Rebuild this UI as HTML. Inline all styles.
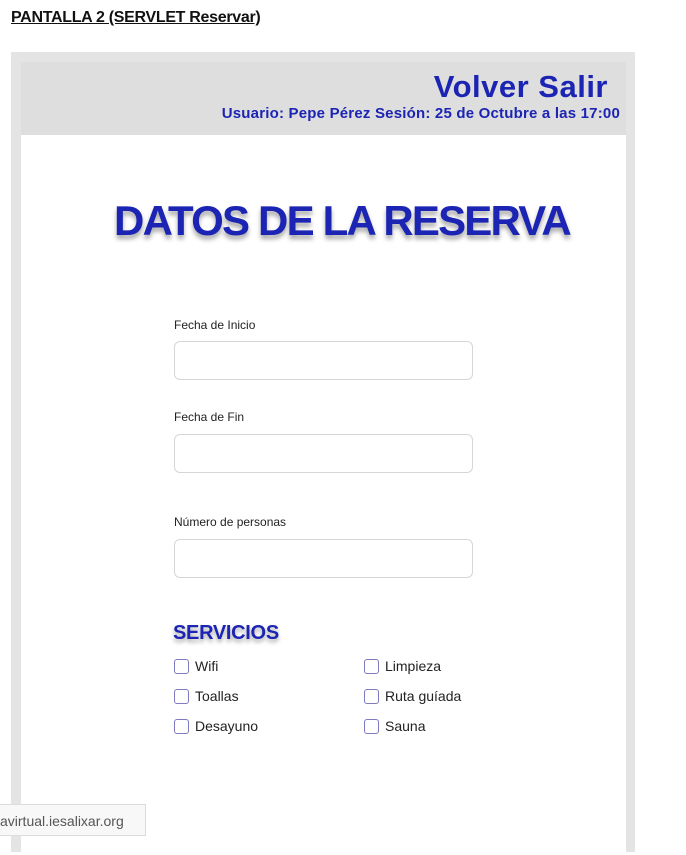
<!DOCTYPE html>
<html><head><meta charset="utf-8"><style>
body{margin:0;width:686px;height:834px;background:#fff;position:relative;overflow:hidden;font-family:"Liberation Sans",sans-serif}
.a{position:absolute}
.h{left:11px;top:9px;font-size:16px;font-weight:bold;text-decoration:underline;color:#111;letter-spacing:-0.3px}
.outer{left:11px;top:52px;width:624px;height:800px;background:#e4e4e4}
.head{left:21px;top:62px;width:605px;height:73px;background:#dedede}
.white{left:21px;top:135px;width:605px;height:720px;background:#fff}
.blue{color:#1b24b3;font-weight:bold}
.lbl{font-size:12px;color:#222;left:174px}
.inp{left:174px;width:297px;height:37px;border:1px solid #d6d6d6;border-radius:6px;background:#fff}
.cb{width:13px;height:13px;border:1.5px solid #7d7ac0;border-radius:3px}
.ct{font-size:14px;color:#222}
</style></head><body>
<div class="a h">PANTALLA 2 (SERVLET Reservar)</div>
<div class="a outer"></div>
<div class="a head"></div>
<div class="a white"></div>
<div class="a blue" style="right:78px;top:69px;font-size:31px;letter-spacing:0.5px">Volver Salir</div>
<div class="a blue" style="right:66px;top:105px;font-size:15px;letter-spacing:0.2px">Usuario: Pepe Pérez Sesión: 25 de Octubre a las 17:00</div>
<div class="a blue" style="left:21px;width:642px;text-align:center;top:197px;font-size:42px;letter-spacing:-1.8px;text-shadow:0 4px 5px rgba(0,0,0,.35)">DATOS DE LA RESERVA</div>
<div class="a lbl" style="top:318px">Fecha de Inicio</div>
<div class="a inp" style="top:341px"></div>
<div class="a lbl" style="top:410px">Fecha de Fin</div>
<div class="a inp" style="top:434px"></div>
<div class="a lbl" style="top:515px">Número de personas</div>
<div class="a inp" style="top:539px"></div>
<div class="a blue" style="left:173px;top:622px;font-size:20px;letter-spacing:-0.3px;text-shadow:0 3px 4px rgba(0,0,0,.35)">SERVICIOS</div>
<div class="a cb" style="left:174px;top:659px"></div><div class="a ct" style="left:195px;top:658px">Wifi</div>
<div class="a cb" style="left:174px;top:689px"></div><div class="a ct" style="left:195px;top:688px">Toallas</div>
<div class="a cb" style="left:174px;top:719px"></div><div class="a ct" style="left:195px;top:718px">Desayuno</div>
<div class="a cb" style="left:364px;top:659px"></div><div class="a ct" style="left:385px;top:658px">Limpieza</div>
<div class="a cb" style="left:364px;top:689px"></div><div class="a ct" style="left:385px;top:688px">Ruta guíada</div>
<div class="a cb" style="left:364px;top:719px"></div><div class="a ct" style="left:385px;top:718px">Sauna</div>
<div class="a" style="left:-1px;top:804px;width:147px;height:32px;background:#f8f8f8;border:1px solid #dcdcdc;box-sizing:border-box;font-size:14px;color:#555;padding:8px 0 0 0;white-space:nowrap;overflow:hidden">avirtual.iesalixar.org</div>
</body></html>
